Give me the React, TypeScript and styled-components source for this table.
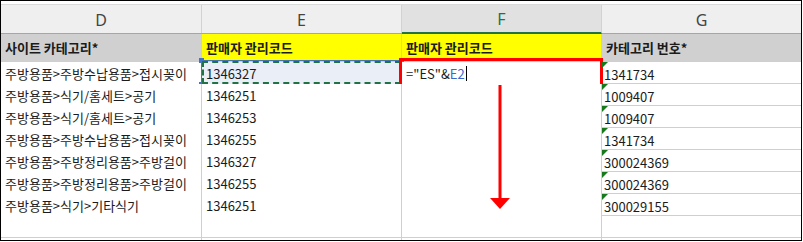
import styled, { createGlobalStyle, css } from 'styled-components';

const GlobalStyle = createGlobalStyle`
  html, body {
    margin: 0;
    padding: 0;
    background: #ffffff;
  }

  body {
    font-family: 'Noto Sans CJK KR', 'Noto Sans', sans-serif;
  }
`;

const GRID = '#cfcfcf';

const S = {
  Frame: styled.div`
    border: 1px solid #000000;
    box-sizing: border-box;
    height: 241px;
    overflow: hidden;
    padding-top: 3px;
    position: relative;
    width: 802px;
  `,

  Row: styled.div<{ $height: number; $line?: string }>`
    border-bottom: 1px solid ${({ $line }) => $line ?? GRID};
    display: grid;
    grid-template-columns: 201px 200px 200px 1fr;
    height: ${({ $height }) => $height}px;
  `,

  ColumnHeaders: styled.div`
    border-bottom: 1px solid #a6a6a6;
    border-top: 1px solid #dadada;
    display: grid;
    grid-template-columns: 201px 200px 200px 1fr;
    height: 28px;
  `,

  ColumnLetter: styled.div<{ $active?: boolean }>`
    align-items: center;
    background: #efefef;
    border-right: 1px solid #d2d2d2;
    box-sizing: border-box;
    color: #444444;
    display: flex;
    font-family: 'Noto Sans', sans-serif;
    font-size: 16px;
    justify-content: center;
    padding-top: 1px;

    &:last-child {
      border-right: none;
    }

    ${({ $active }) =>
      $active &&
      css`
        background: #e1e1e1;
        border-bottom: 2px solid #217346;
        color: #217346;
        margin-bottom: -1px;
      `}
  `,

  Cell: styled.div<{ $bg?: string; $bold?: boolean }>`
    align-items: center;
    background: ${({ $bg }) => $bg ?? '#ffffff'};
    border-right: 1px solid ${GRID};
    box-sizing: border-box;
    color: #1b1b1b;
    display: flex;
    font-size: 13px;
    font-weight: ${({ $bold }) => ($bold ? 700 : 400)};
    min-width: 0;
    padding: 0 4px;
    position: relative;
    white-space: nowrap;

    &:last-child {
      border-right: none;
    }
  `,

  TextNumber: styled.div`
    align-items: center;
    color: #1b1b1b;
    display: flex;
    font-size: 13px;
    padding: 3px 2px 0;
    position: relative;

    &::before {
      border-right: 6px solid transparent;
      border-top: 6px solid #16791b;
      content: '';
      left: 0;
      position: absolute;
      top: 0;
    }
  `,

  CopiedRef: styled.div`
    border: 1px solid #4472c4;
    inset: -2px -1px -1px -1px;
    pointer-events: none;
    position: absolute;

    &::after {
      border: 2px dashed #217346;
      content: '';
      inset: 0;
      position: absolute;
    }
  `,

  Handle: styled.span<{ $x: 'left' | 'right'; $y: 'top' | 'bottom' }>`
    background: #4472c4;
    height: 5px;
    position: absolute;
    width: 5px;
    ${({ $x }) => ($x === 'left' ? 'left: -3px;' : 'right: -3px;')}
    ${({ $y }) => ($y === 'top' ? 'top: -3px;' : 'bottom: -3px;')}
  `,

  EditBox: styled.div`
    border: 3px solid #ff0000;
    inset: -4px -2px -3px -3px;
    pointer-events: none;
    position: absolute;
  `,

  RefText: styled.span`
    color: #3c66cc;
  `,

  Caret: styled.span`
    background: #000000;
    display: inline-block;
    height: 15px;
    margin-left: 1px;
    width: 1px;
  `,

  Arrow: styled.svg`
    left: 488px;
    pointer-events: none;
    position: absolute;
    top: 84px;
  `,
};

const rows = [
  { category: '주방용품>주방수납용품>접시꽂이', code: '1346327', number: '1341734' },
  { category: '주방용품>식기/홈세트>공기', code: '1346251', number: '1009407' },
  { category: '주방용품>식기/홈세트>공기', code: '1346253', number: '1009407' },
  { category: '주방용품>주방수납용품>접시꽂이', code: '1346255', number: '1341734' },
  { category: '주방용품>주방정리용품>주방걸이', code: '1346327', number: '300024369' },
  { category: '주방용품>주방정리용품>주방걸이', code: '1346255', number: '300024369' },
  { category: '주방용품>식기>기타식기', code: '1346251', number: '300029155' },
];

export default function App() {
  return (
    <>
      <GlobalStyle />
      <S.Frame>
        <S.ColumnHeaders>
          <S.ColumnLetter>D</S.ColumnLetter>
          <S.ColumnLetter>E</S.ColumnLetter>
          <S.ColumnLetter $active>F</S.ColumnLetter>
          <S.ColumnLetter>G</S.ColumnLetter>
        </S.ColumnHeaders>

        <S.Row $height={27}>
          <S.Cell $bg="#d0d0d0" $bold>
            사이트 카테고리*
          </S.Cell>
          <S.Cell $bg="#ffff00" $bold>
            판매자 관리코드
          </S.Cell>
          <S.Cell $bg="#ffff00" $bold>
            판매자 관리코드
          </S.Cell>
          <S.Cell $bg="#d0d0d0" $bold>
            카테고리 번호*
          </S.Cell>
        </S.Row>

        {rows.map((row, i) => (
          <S.Row key={i} $height={21}>
            <S.Cell>{row.category}</S.Cell>
            <S.Cell $bg={i === 0 ? '#eaeff7' : undefined}>
              {row.code}
              {i === 0 && (
                <S.CopiedRef>
                  <S.Handle $x="left" $y="top" />
                  <S.Handle $x="right" $y="top" />
                  <S.Handle $x="left" $y="bottom" />
                  <S.Handle $x="right" $y="bottom" />
                </S.CopiedRef>
              )}
            </S.Cell>
            <S.Cell>
              {i === 0 && (
                <>
                  ="ES"&amp;<S.RefText>E2</S.RefText>
                  <S.Caret />
                  <S.EditBox />
                </>
              )}
            </S.Cell>
            <S.TextNumber>{row.number}</S.TextNumber>
          </S.Row>
        ))}

        <S.Row $height={21}>
          <S.Cell />
          <S.Cell />
          <S.Cell />
          <S.Cell />
        </S.Row>
        <S.Row $height={21} $line="#e4e4e4">
          <S.Cell />
          <S.Cell />
          <S.Cell />
          <S.Cell />
        </S.Row>

        <S.Arrow width="24" height="128" viewBox="0 0 24 128">
          <rect x="9.5" y="0" width="3" height="114" fill="#ff0000" />
          <polygon points="1,113 21,113 11,124" fill="#ff0000" />
        </S.Arrow>
      </S.Frame>
    </>
  );
}
